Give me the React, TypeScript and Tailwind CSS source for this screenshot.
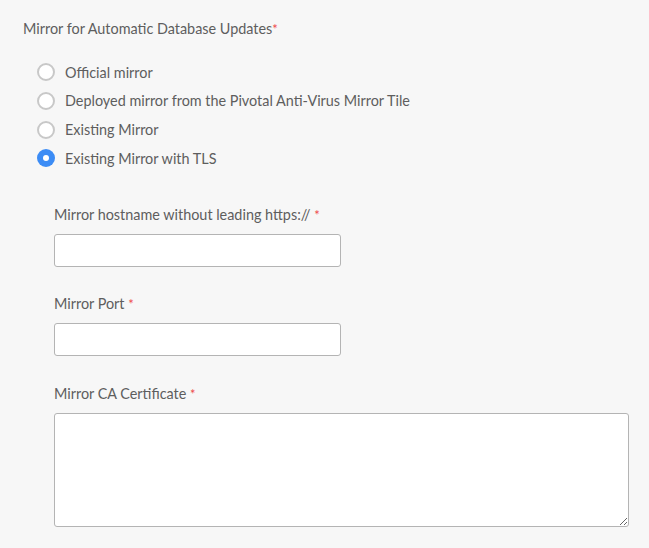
function Radio({ label, checked }: { label: string; checked?: boolean }) {
  return (
    <label className="flex items-center h-[28.7px]">
      {checked ? (
        <span className="w-[18px] h-[18px] rounded-full bg-[#3c8cf5] flex items-center justify-center">
          <span className="w-[6px] h-[6px] rounded-full bg-white" />
        </span>
      ) : (
        <span className="w-[18px] h-[18px] rounded-full bg-white border-2 border-[#c8c8c8]" />
      )}
      <span className="ml-[10px]">{label}</span>
    </label>
  );
}

function Field({ label, area }: { label: string; area?: boolean }) {
  return (
    <div className="flex flex-col">
      <div className="h-[20px] leading-[20px]">
        {label} <span className="text-[#ee4b4b] text-[13px] align-top">*</span>
      </div>
      {area ? (
        <textarea className="mt-[9px] w-[575px] h-[114px] bg-white border border-[#b4b4b4] rounded-[3px]" />
      ) : (
        <input className="mt-[9px] w-[287px] h-[33px] bg-white border border-[#b4b4b4] rounded-[3px]" />
      )}
    </div>
  );
}

export default function App() {
  return (
    <div className="w-[649px] h-[548px] bg-[#f7f7f7] text-[#5e5e5e] text-[14.4px] font-['Lato','Open_Sans',sans-serif] pl-[23px] pt-[19px]">
      <div className="h-[20px] leading-[20px]">
        Mirror for Automatic Database Updates<span className="text-[#ee4b4b] text-[13px] align-top">*</span>
      </div>
      <div className="mt-[19px] ml-[14px] flex flex-col">
        <Radio label="Official mirror" />
        <Radio label="Deployed mirror from the Pivotal Anti-Virus Mirror Tile" />
        <Radio label="Existing Mirror" />
        <Radio label="Existing Mirror with TLS" checked />
      </div>
      <div className="mt-[32px] ml-[31px] flex flex-col gap-[27.5px]">
        <Field label="Mirror hostname without leading https://" />
        <Field label="Mirror Port" />
        <Field label="Mirror CA Certificate" area />
      </div>
    </div>
  );
}
